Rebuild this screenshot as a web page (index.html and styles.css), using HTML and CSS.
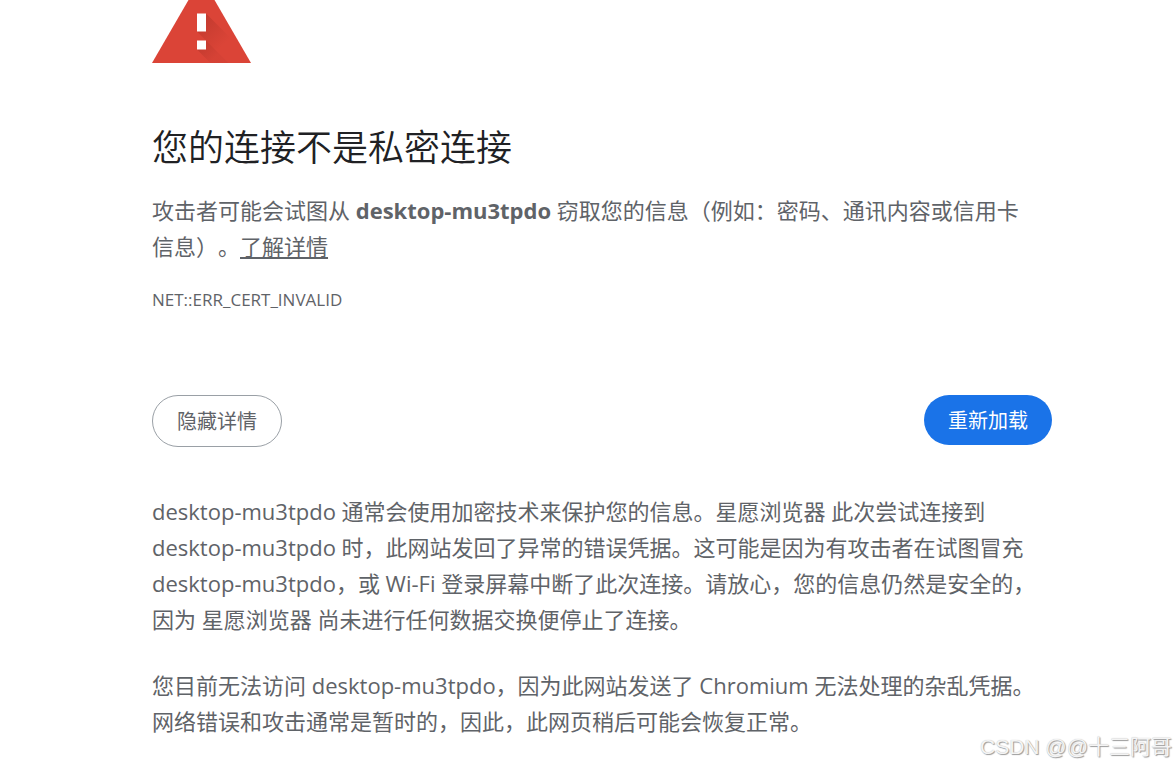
FILE: index.html
```html
<!DOCTYPE html>
<html lang="zh-CN">

<head>
    <meta charset="UTF-8">
    <meta name="viewport" content="width=device-width, initial-scale=1.0">
    <title>隐私设置错误</title>
    <link rel="stylesheet" href="styles.css">
</head>

<body>
    <main class="interstitial">
        <svg class="icon" viewBox="0 0 99 63" width="99" height="63" aria-hidden="true">
            <defs>
                <linearGradient id="shade" gradientUnits="userSpaceOnUse" x1="48" y1="20" x2="72" y2="44">
                    <stop offset="0" stop-color="#a52f25" stop-opacity="0.45" />
                    <stop offset="1" stop-color="#a52f25" stop-opacity="0" />
                </linearGradient>
                <linearGradient id="shade-dot" gradientUnits="userSpaceOnUse" x1="48" y1="44" x2="62" y2="58">
                    <stop offset="0" stop-color="#a52f25" stop-opacity="0.45" />
                    <stop offset="1" stop-color="#a52f25" stop-opacity="0.1" />
                </linearGradient>
            </defs>
            <path fill="#db4437" d="M36.5 0h26L99 63H0z" />
            <path fill="url(#shade)" d="M54 13.5L80 39.5L94 63H76.5L45 31.5z" />
            <path fill="url(#shade-dot)" d="M54 40.5L76.5 63H58.5L45 49.5z" />
            <path fill="#fff" d="M45 13.5h9v18h-9zM45 40.5h9v9h-9z" />
        </svg>

        <h1>您的连接不是私密连接</h1>
        <p>攻击者可能会试图从 <strong>desktop-mu3tpdo</strong> 窃取您的信息（例如：密码、通讯内容或信用卡<br>信息）。<a href="#">了解详情</a></p>
        <div class="error-code">NET::ERR_CERT_INVALID</div>

        <div class="buttons">
            <button type="button" class="secondary">隐藏详情</button>
            <button type="button" class="primary">重新加载</button>
        </div>

        <div class="details">
            <p>desktop-mu3tpdo 通常会使用加密技术来保护您的信息。星愿浏览器 此次尝试连接到 desktop-mu3tpdo 时，此网站发回了异常的错误凭据。这可能是因为有攻击者在试图冒充 desktop-mu3tpdo，或 Wi-Fi 登录屏幕中断了此次连接。请放心，您的信息仍然是安全的，<br>因为 星愿浏览器 尚未进行任何数据交换便停止了连接。</p>
            <p>您目前无法访问 desktop-mu3tpdo，因为此网站发送了 Chromium 无法处理的杂乱凭据。<br>网络错误和攻击通常是暂时的，因此，此网页稍后可能会恢复正常。</p>
        </div>
    </main>
    <div class="watermark">CSDN @@十三阿哥</div>
</body>

</html>
```

FILE: styles.css
```css
body {
    margin: 0;
    padding-left: 28px;
    background: #fff;
    color: #5f6368;
    font-family: "Open Sans", "Noto Sans CJK SC", sans-serif;
    font-size: 22px;
    line-height: 36px;
    text-spacing-trim: space-all;
}

.interstitial {
    max-width: 900px;
    margin: 0 auto;
}

.icon {
    display: block;
}

h1 {
    margin: 60px 0 19px;
    color: #202124;
    font-size: 36px;
    font-weight: 350;
    line-height: 50px;
}

p {
    margin: 0;
}

a {
    color: inherit;
}

.error-code {
    margin-top: 22px;
    font-size: 17px;
    line-height: 28px;
}

.buttons {
    display: flex;
    justify-content: space-between;
    align-items: flex-start;
    margin-top: 81px;
}

button {
    padding: 11px 24px 9px;
    border: 0;
    border-radius: 26px;
    font-family: inherit;
    font-size: 20px;
    line-height: 30px;
    cursor: pointer;
}

.primary {
    background: #1a73e8;
    color: #fff;
}

.secondary {
    border: 1px solid #9aa0a6;
    background: #fff;
    color: #5f6368;
}

.details {
    margin-top: 46px;
}

.details p + p {
    margin-top: 30px;
}

.watermark {
    position: absolute;
    right: 4px;
    bottom: 2px;
    color: #f4f4f4;
    font-family: "Liberation Sans", "Noto Sans CJK SC", sans-serif;
    font-size: 21px;
    text-shadow: 1px 1px 1px #999, 0 0 1px #bbb;
}
```
